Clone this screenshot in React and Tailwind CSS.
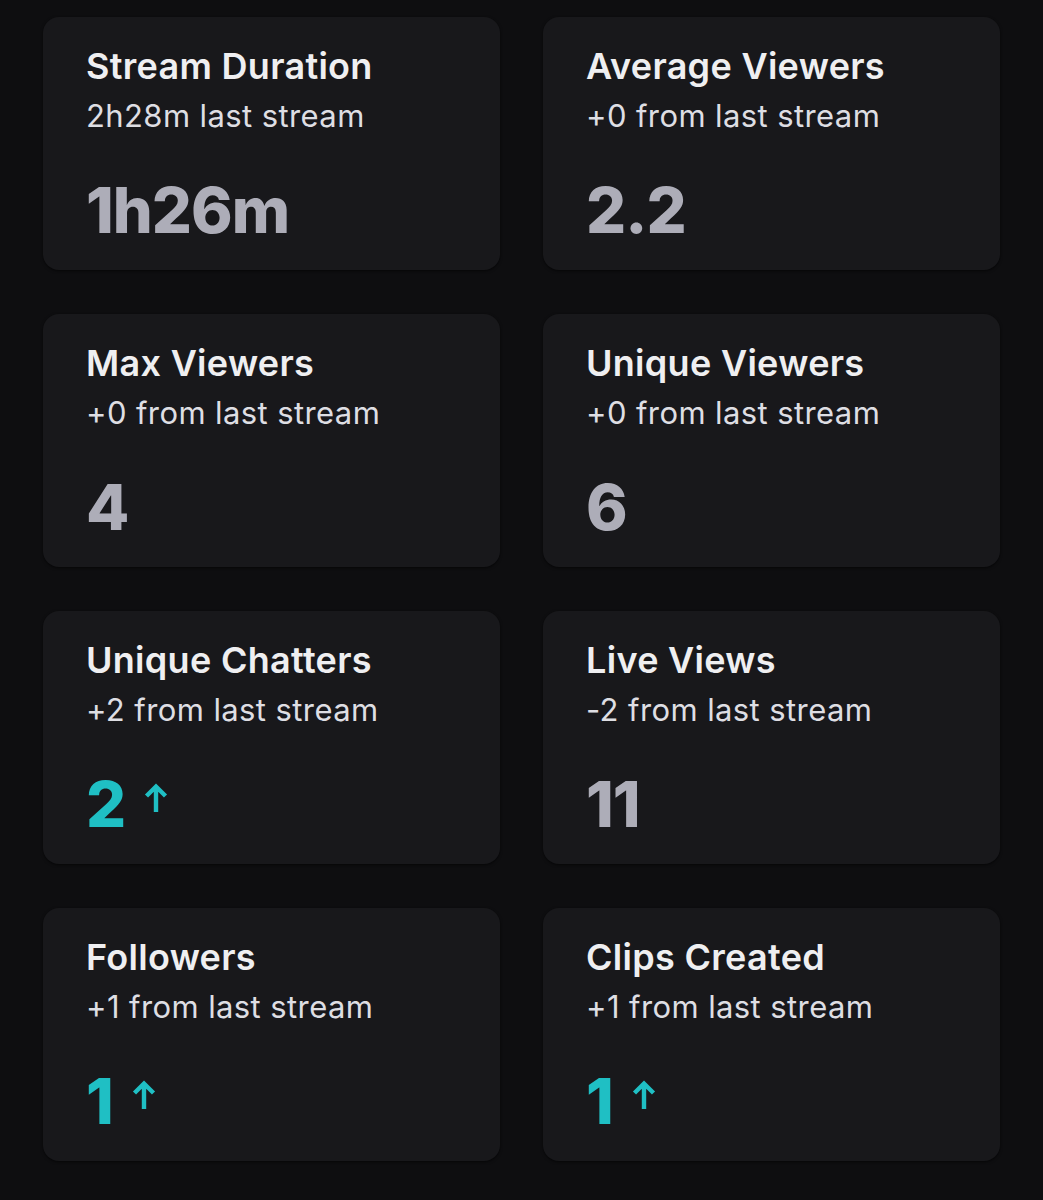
const STATS = [
  { title: 'Stream Duration', sub: '2h28m last stream', value: '1h26m' },
  { title: 'Average Viewers', sub: '+0 from last stream', value: '2.2' },
  { title: 'Max Viewers', sub: '+0 from last stream', value: '4' },
  { title: 'Unique Viewers', sub: '+0 from last stream', value: '6' },
  { title: 'Unique Chatters', sub: '+2 from last stream', value: '2', up: true },
  { title: 'Live Views', sub: '-2 from last stream', value: '11' },
  { title: 'Followers', sub: '+1 from last stream', value: '1', up: true },
  { title: 'Clips Created', sub: '+1 from last stream', value: '1', up: true },
]

function ArrowUp() {
  return (
    <svg width="26" height="31" viewBox="0 0 26 31" fill="none" aria-hidden="true" className="mt-[-14px]">
      <path d="M13 30V4.5M3.5 14L13 4.5l9.5 9.5" stroke="currentColor" strokeWidth="4.4" strokeLinecap="butt" strokeLinejoin="miter" />
    </svg>
  )
}

function StatCard({ stat }) {
  return (
    <div className="h-[253px] rounded-[16px] bg-[#18181b] px-[43px] pt-[28px] shadow-[0_1px_3px_rgba(0,0,0,0.6)]">
      <h3 className="text-[36px] leading-[42px] font-semibold tracking-[0.3px] text-[#efeff1]">{stat.title}</h3>
      <p className="mt-[11px] text-[31px] leading-[36px] tracking-[0.4px] text-[#dedee3]">{stat.sub}</p>
      <div className={`mt-[45px] flex items-center gap-[18px] ${stat.up ? 'text-[#1fbfc4]' : 'text-[#adadb8]'}`}>
        <span className="text-[63px] leading-[63px] font-extrabold tracking-[-1px]">{stat.value}</span>
        {stat.up && <ArrowUp />}
      </div>
    </div>
  )
}

export default function App() {
  return (
    <div className="min-h-[1200px] bg-[#0e0e10] px-[43px] pt-[17px] pb-[38px]" style={{ fontFamily: 'Inter, "Noto Sans", sans-serif' }}>
      <div className="grid grid-cols-2 gap-x-[43px] gap-y-[44px]">
        {STATS.map((s) => <StatCard key={s.title} stat={s} />)}
      </div>
    </div>
  )
}
